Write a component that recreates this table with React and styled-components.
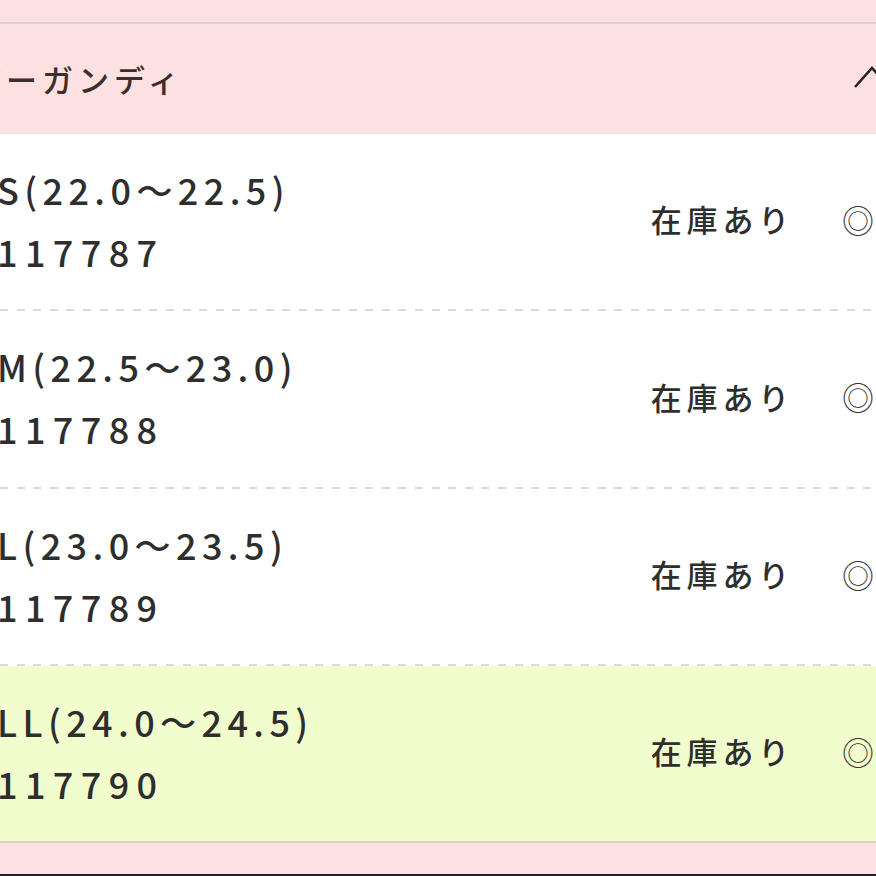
import React from "react";
import styled, { createGlobalStyle } from "styled-components";

const Global = createGlobalStyle`
  html, body { margin: 0; padding: 0; }
  body {
    width: 876px;
    height: 876px;
    overflow: hidden;
    background: #fde1e1;
    font-family: "Noto Sans CJK JP", "Noto Sans", sans-serif;
  }
`;

const Page = styled.div`
  width: 876px;
  height: 876px;
  overflow: hidden;
  display: flex;
  flex-direction: column;
  background: #fde1e1;
`;

const Band = styled.div`
  height: ${(p) => p.h}px;
  flex: none;
  background: #fde1e1;
`;

const Rule = styled.div`
  height: 2px;
  flex: none;
  background: ${(p) => p.color || "#d9d1cd"};
`;

const Header = styled.div`
  height: 110px;
  flex: none;
  display: flex;
  align-items: center;
  justify-content: space-between;
  background: #fde1e1;
  padding-bottom: 2px;
  box-sizing: border-box;
`;

const Title = styled.div`
  margin-left: -30px;
  font-size: 31px;
  font-weight: 500;
  letter-spacing: 5px;
  color: #3b2e2f;
`;

const Chevron = styled.svg`
  flex: none;
  width: 44px;
  height: 26px;
  margin-right: -21px;
  margin-top: -2px;
`;

const Row = styled.div`
  height: ${(p) => p.h}px;
  flex: none;
  display: flex;
  align-items: center;
  background: ${(p) => (p.$active ? "#f1fdcc" : "#ffffff")};
  color: #2e2e2e;
`;

const Dash = styled.div`
  height: 2px;
  flex: none;
  background-color: #ffffff;
  background-image: repeating-linear-gradient(
    90deg,
    #dadada 0 8px,
    transparent 8px 16.6px
  );
`;

const Info = styled.div`
  flex: 1;
  display: flex;
  flex-direction: column;
  gap: 18px;
  margin-left: -3px;
  margin-top: -4px;
`;

const Size = styled.div`
  font-size: 36px;
  line-height: 44px;
  letter-spacing: 5.4px;
  font-weight: 500;
`;

const Code = styled.div`
  font-size: 36px;
  line-height: 44px;
  letter-spacing: 7.4px;
  font-weight: 500;
`;

const Stock = styled.div`
  font-size: 31px;
  font-weight: 500;
  letter-spacing: 4.8px;
  margin-right: 48px;
  margin-top: -6px;
`;

const Mark = styled.div`
  font-size: 32px;
  font-weight: 300;
  width: 40px;
  margin-right: -6px;
  margin-top: -6px;
  color: #333;
`;

const items = [
  { size: "S(22.0～22.5)", code: "117787" },
  { size: "M(22.5～23.0)", code: "117788" },
  { size: "L(23.0～23.5)", code: "117789" },
  { size: "LL(24.0～24.5)", code: "117790", active: true },
];

const heights = [175, 176, 175, 175];

export default function App() {
  return (
    <Page>
      <Global />
      <Band h={22} />
      <Rule />
      <Header>
        <Title>バーガンディ</Title>
        <Chevron viewBox="0 0 44 26">
          <polyline
            points="2,23 19,4 36,23"
            fill="none"
            stroke="#2b2324"
            strokeWidth="2.6"
          />
        </Chevron>
      </Header>
      {items.map((it, i) => (
        <React.Fragment key={it.code}>
          {i > 0 && <Dash />}
          <Row h={heights[i]} $active={it.active}>
            <Info>
              <Size>{it.size}</Size>
              <Code>{it.code}</Code>
            </Info>
            <Stock>在庫あり</Stock>
            <Mark>◎</Mark>
          </Row>
        </React.Fragment>
      ))}
      <Rule />
      <Band h={31} />
      <Rule color="#222" />
    </Page>
  );
}
